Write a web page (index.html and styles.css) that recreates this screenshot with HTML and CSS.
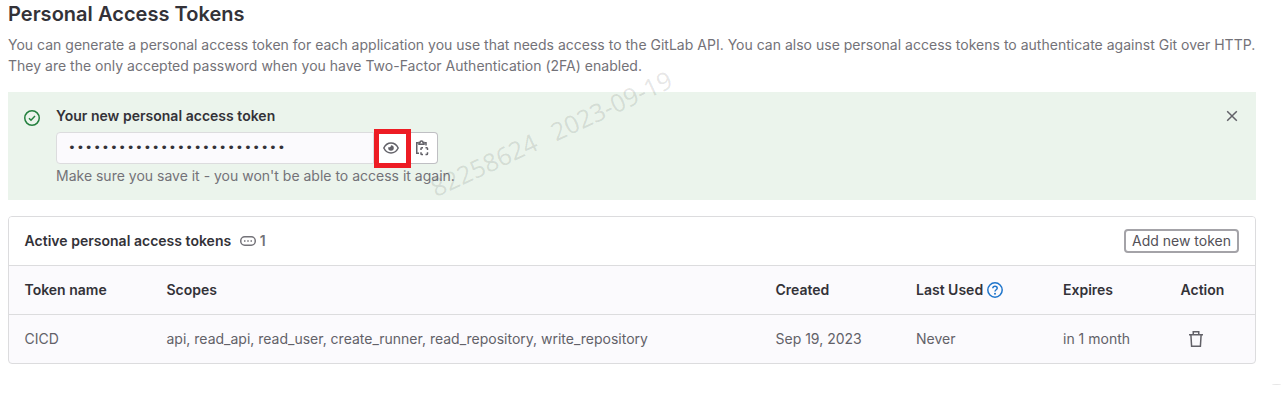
FILE: index.html
```html
<!DOCTYPE html>
<html lang="en">
<head>
<meta charset="utf-8">
<title>Personal Access Tokens</title>
<link rel="stylesheet" href="styles.css">
</head>
<body>
<main class="page">
  <h1 class="title">Personal Access Tokens</h1>
  <p class="intro">You can generate a personal access token for each application you use that needs access to the GitLab API. You can also use personal access tokens to authenticate against Git over HTTP.<br>They are the only accepted password when you have Two-Factor Authentication (2FA) enabled.</p>

  <section class="alert">
    <svg class="icon alert-icon" viewBox="0 0 16 16"><circle cx="8" cy="8" r="7.25"/><path d="M5 8.2l2 2 4-4.2"/></svg>
    <div class="alert-body">
      <h2 class="alert-title">Your new personal access token</h2>
      <div class="token-group">
        <div class="token-input">••••••••••••••••••••••••••</div>
        <button class="reveal" aria-label="Reveal"><svg class="icon" viewBox="0 0 16 16"><path d="M.8 8C2.3 5 4.8 3 8 3s5.700 2 7.200 5C13.700 11 11.200 13 8 13S2.300 11 .8 8z"/><path class="solid" d="M8 5.200a2.800 2.800 0 1 1-2.800 2.800c0-.3 0-.6.100-.8A2 2 0 0 0 8 5.200z"/></svg></button>
        <button class="copy" aria-label="Copy"><svg class="icon" viewBox="0 0 16 16"><path d="M4.500 2.750H2.750v10.500H5M10.500 2.750h1.500V5.500"/><path d="M5 4.250V2.500h1a1.500 1.500 0 0 1 3 0h1v1.750z"/><path d="M7 10V8.500a.75.75 0 0 1 .75-.75H9M11.500 7.750h1.250a.75.75 0 0 1 .75.75V10M13.500 12.200v1.500a.75.75 0 0 1-.75.75H11.500M9 14.450H7.750a.75.75 0 0 1-.75-.75v-1.500"/></svg></button>
      </div>
      <p class="alert-help">Make sure you save it - you won't be able to access it again.</p>
    </div>
    <svg class="icon close" viewBox="0 0 16 16"><path d="M3.200 3.200l9.600 9.600M12.800 3.200l-9.600 9.600"/></svg>
  </section>

  <section class="card">
    <header class="card-header">
      <h2 class="card-title">Active personal access tokens</h2>
      <span class="count"><svg class="icon" viewBox="0 0 16 16"><rect x=".75" y="3.750" width="14.500" height="8.500" rx="4"/><path class="solid" d="M4 7.250h1.500v1.500H4zM7.250 7.250h1.500v1.500h-1.500zM10.500 7.250H12v1.500h-1.500z"/></svg>1</span>
      <button class="add">Add new token</button>
    </header>
    <div class="row head">
      <span>Token name</span><span>Scopes</span><span>Created</span>
      <span class="last-used">Last Used<svg class="icon help" viewBox="0 0 16 16"><circle cx="8" cy="8" r="7.200"/><path d="M5.800 6.300C5.900 5 6.700 4.300 8 4.300s2.200.8 2.200 1.900c0 1.500-2.200 1.600-2.200 3.300"/><circle class="solid" cx="8" cy="11.700" r="1"/></svg></span>
      <span>Expires</span><span>Action</span>
    </div>
    <div class="row">
      <span>CICD</span><span>api, read_api, read_user, create_runner, read_repository, write_repository</span><span>Sep 19, 2023</span><span>Never</span><span>in 1 month</span>
      <span class="action"><svg class="icon" viewBox="0 0 16 16"><path d="M1 3.750h14M5.250 3.500V.75h5.500V3.500M2.900 4l.7 11.250h8.800L13.100 4"/></svg></span>
    </div>
  </section>
</main>
<div class="watermark"><span>82258624</span><span>2023-09-19</span></div>
<div class="watermark-edge"></div>
</body>
</html>
```
FILE: styles.css
```css
* { box-sizing: border-box; }
html, body { height: 100%; overflow: hidden; }
body {
  margin: 0;
  position: relative;
  background: #fff;
  color: #333238;
  font: 14px/20px Inter, "Noto Sans", sans-serif;
}
h1, h2, p { margin: 0; }
button { font: inherit; color: inherit; margin: 0; padding: 0; }
.page { width: 1248px; margin-left: 8px; }
.title { height: 34px; font-size: 20px; line-height: 28px; font-weight: 600; letter-spacing: .03px; }
.intro { height: 58px; line-height: 21px; color: #737278; letter-spacing: .008px; white-space: nowrap; }
.icon { display: block; flex: none; width: 16px; height: 16px; fill: none; stroke: currentColor; stroke-width: 1.5; }
.icon .solid { fill: currentColor; stroke: none; }

.alert { display: flex; height: 108px; padding: 14px 16px 0; background: #ebf4ec; }
.alert-icon { margin: 4px 16px 0 0; color: #24803f; }
.alert-title { font-size: 14px; line-height: 20px; font-weight: 600; letter-spacing: .02px; }
.token-group { display: flex; width: 382px; height: 32px; margin: 6px 0 2px; }
.token-input {
  flex: 1;
  padding: 0 11px;
  border: 1px solid #dcdcde;
  border-radius: 4px 0 0 4px;
  background: #fbfafd;
  font: 13px/30px "DejaVu Sans Mono", monospace;
  letter-spacing: .55px;
}
.token-group button { display: flex; align-items: center; border: 1px solid #bfbfc3; background: #fff; color: #626168; }
.token-group .reveal { width: 37px; height: 39px; margin: -3px 0 0; padding: 0 0 1px 4px; border: 5px solid #ed1c24; }
.token-group .copy { width: 27px; padding-left: 3px; border-left: 0; border-radius: 0 4px 4px 0; }
.alert-help { color: #737278; }
.close { margin: 2px 0 0 auto; color: #626168; }

.card { height: 148px; margin-top: 16px; border: 1px solid #dcdcde; border-radius: 4px; background: #fbfafd; overflow: hidden; }
.card-header { display: flex; align-items: center; height: 48px; padding: 0 16px 0 15.500px; background: #fff; }
.card-title { font-size: 14px; line-height: 20px; font-weight: 600; letter-spacing: .02px; }
.count { display: flex; align-items: center; gap: 4px; margin-left: 8.500px; color: #737278; font-weight: 600; }
.add { width: 115px; height: 24px; margin-left: auto; border: 2px solid #a4a3a8; border-radius: 4px; background: #fff; color: #535158; line-height: 20px; }
.row {
  display: grid;
  grid-template-columns: 142px 609px 140.500px 147px 117.500px 1fr;
  align-items: center;
  height: 49px;
  padding-left: 15.500px;
  border-top: 1px solid #dcdcde;
  color: #626168;
  white-space: nowrap;
}
.head { color: #333238; font-weight: 600; }
.last-used { display: flex; align-items: center; gap: 4px; }
.help { color: #1f75cb; }
.action { padding-left: 7.500px; color: #626168; }

.watermark {
  display: flex;
  justify-content: center;
  gap: 18px;
  position: absolute;
  left: 401px;
  top: 117px;
  width: 300px;
  font: 25px/32px "Noto Sans", sans-serif;
  color: rgba(0, 0, 0, .1);
  transform: rotate(-25deg);
  white-space: pre;
}
.watermark-edge { position: absolute; left: 1272px; top: 384px; width: 9px; height: 2px; border-top: 1px solid #e6e6e6; border-radius: 50%; }
```
